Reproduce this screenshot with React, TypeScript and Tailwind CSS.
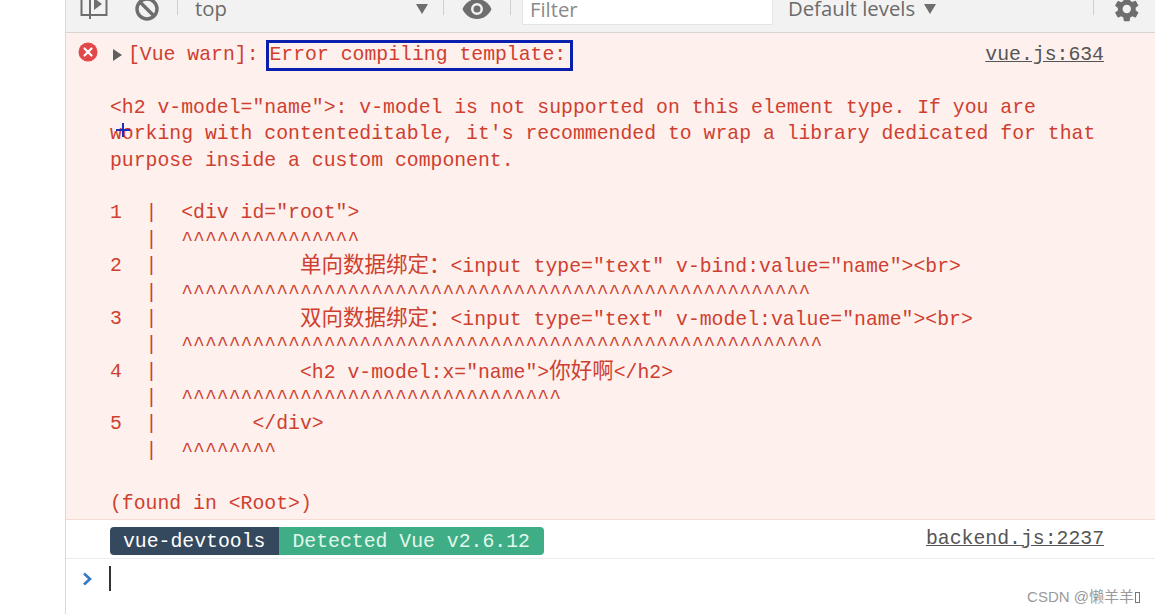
const codeLines: { num?: string; text: React.ReactNode }[] = [
  { num: '1', text: '<div id="root">' },
  { text: '^'.repeat(15) },
  { num: '2', text: <>{'          '}<Cjk>单向数据绑定：</Cjk>{'<input type="text" v-bind:value="name"><br>'}</> },
  { text: '^'.repeat(53) },
  { num: '3', text: <>{'          '}<Cjk>双向数据绑定：</Cjk>{'<input type="text" v-model:value="name"><br>'}</> },
  { text: '^'.repeat(54) },
  { num: '4', text: <>{'          <h2 v-model:x="name">'}<Cjk>你好啊</Cjk>{'</h2>'}</> },
  { text: '^'.repeat(32) },
  { num: '5', text: '      </div>' },
  { text: '^'.repeat(8) },
];

function Cjk({ children }: { children: React.ReactNode }) {
  return <span className="text-[21.5px]">{children}</span>;
}

function Line({ children }: { children?: React.ReactNode }) {
  return <div className="h-[26.4px] leading-[26.4px] whitespace-pre">{children}</div>;
}

function Separator() {
  return <div className="w-px h-[22px] -mt-[10px] bg-[#cfcfcf] shrink-0" />;
}

function Triangle() {
  return (
    <svg width="14" height="12" viewBox="0 0 14 12" className="shrink-0">
      <path d="M1 1h12l-6 10z" fill="#6e6e6e" />
    </svg>
  );
}

export default function App() {
  return (
    <div className="h-[614px] w-[1155px] overflow-hidden bg-white pl-[65px] font-['Liberation_Mono','Noto_Sans_CJK_SC',monospace] text-[19.8px]">
      <div className="h-full border-l border-[#d9d9d9]">
        {/* toolbar, cut off at the top of the shot */}
        <div className="h-[33px] pb-[14px] bg-[#f2f2f2] border-b border-[#d8d4d2] flex items-center font-['Open_Sans',sans-serif] text-[20.3px] text-[#6a6a6a]">
          <svg width="28" height="24" viewBox="0 0 28 24" className="ml-[14px] shrink-0 -mt-[4px]">
            <path d="M1.5 0v20h25V0M10 0v24" fill="none" stroke="#6e6e6e" strokeWidth="2" />
            <path d="M14 3l8 6-8 6z" fill="#6e6e6e" />
          </svg>
          <svg width="24" height="24" viewBox="0 0 24 24" className="ml-[27px] shrink-0">
            <circle cx="12" cy="12" r="10" fill="none" stroke="#6e6e6e" strokeWidth="3.4" />
            <path d="M5 5l14 14" stroke="#6e6e6e" strokeWidth="3.4" />
          </svg>
          <div className="ml-[18px]"><Separator /></div>
          <span className="ml-[17px] w-[220px] -mt-[2px]">top</span>
          <Triangle />
          <div className="ml-[14px]"><Separator /></div>
          <svg width="30" height="22" viewBox="0 0 30 22" className="ml-[18px] shrink-0">
            <path fillRule="evenodd" d="M15 1C8.5 1 3 5 .5 11 3 17 8.500 21 15 21s12-4 14.500-10C27 5 21.500 1 15 1zm0 16a6 6 0 1 1 0-12 6 6 0 0 1 0 12zm0-9.500a3.500 3.500 0 1 0 0 7 3.500 3.500 0 0 0 0-7z" fill="#6e6e6e" />
          </svg>
          <div className="ml-[18px]"><Separator /></div>
          <div className="ml-[11px] w-[251px] h-[25px] self-start bg-white border border-[#e4e4e4] border-t-0 pl-[7px] leading-[19px] text-[#8a8a8a]">Filter</div>
          <span className="ml-[15px] -mt-[2px] whitespace-nowrap">Default levels</span>
          <div className="ml-[8px]"><Triangle /></div>
          <div className="ml-[156px]"><Separator /></div>
          <svg width="28" height="28" viewBox="0 0 24 24" className="ml-[19px] shrink-0">
            <path d="M19.4 13c.04-.32.06-.66.06-1s-.02-.68-.07-1l2.160-1.680a.5.5 0 0 0 .12-.640l-2.050-3.540a.5.5 0 0 0-.62-.22l-2.550 1.020a7.500 7.500 0 0 0-1.730-1l-.39-2.710A.5.5 0 0 0 13.830 2H9.750a.5.5 0 0 0-.5.430l-.38 2.710a7.800 7.800 0 0 0-1.730 1L4.590 5.120a.5.5 0 0 0-.61.22L1.930 8.880a.5.5 0 0 0 .12.640L4.210 11.200c-.05.32-.08.66-.08 1s.02.68.07 1l-2.160 1.680a.5.5 0 0 0-.12.640l2.050 3.540c.13.220.39.300.62.220l2.550-1.020c.53.400 1.110.740 1.730 1l.38 2.710c.05.240.25.430.5.430h4.080c.25 0 .46-.19.500-.43l.38-2.710a7.800 7.800 0 0 0 1.730-1l2.550 1.020c.23.08.49 0 .62-.22l2.050-3.540a.5.5 0 0 0-.12-.640zM11.800 15.600a3.600 3.600 0 1 1 0-7.200 3.600 3.600 0 0 1 0 7.200z" fill="#6e6e6e" />
          </svg>
        </div>

        {/* error message */}
        <div className="h-[487px] bg-[#fdf0ed] border-b border-[#f8d9d4] pt-[9px] flex text-[#cf3f30]">
          <div className="w-[44px] shrink-0 flex justify-center">
            <svg width="20" height="20" viewBox="0 0 20 20">
              <circle cx="10" cy="10" r="9.500" fill="#e2474a" />
              <path d="M6.500 6.500l7 7M13.500 6.500l-7 7" stroke="#fff" strokeWidth="2.200" strokeLinecap="round" />
            </svg>
          </div>
          <div className="flex-1 pr-[51px] min-w-0">
            <div className="flex justify-between h-[26.4px] leading-[26.4px]">
              <div className="flex items-center whitespace-pre">
                <svg width="10" height="12" viewBox="0 0 10 12" className="ml-[3px] mr-[5px] shrink-0">
                  <path d="M0 0l9 6-9 6z" fill="#5f5f5f" />
                </svg>
                <span className="-mr-[1px]">[Vue warn]: </span>
                <span className="inline-block h-[25px] leading-[25px] pr-[4px] outline-[3px] outline-solid outline-[#0a1fae]">Error compiling template:</span>
              </div>
              <span className="underline text-[#555555]">vue.js:634</span>
            </div>
            <Line />
            <Line>{'<h2 v-model="name">: v-model is not supported on this element type. If you are'}</Line>
            <Line>{"working with contenteditable, it's recommended to wrap a library dedicated for that"}</Line>
            <Line>purpose inside a custom component.</Line>
            <Line />
            {codeLines.map((row, i) => (
              <div key={i} className="flex h-[26.4px] leading-[26.4px] whitespace-pre">
                <span>{(row.num ?? ' ') + '  |  '}</span>
                <span>{row.text}</span>
              </div>
            ))}
            <Line />
            <Line>{'(found in <Root>)'}</Line>
          </div>
        </div>

        {/* devtools badge */}
        <div className="h-[39px] border-b border-[#ececec] flex items-center justify-between pl-[44px] pr-[51px]">
          <div className="flex h-[28px] leading-[30px] mt-[3px] rounded-[4px] overflow-hidden">
            <span className="bg-[#35495e] pl-[13px] pr-[14px] text-white">vue-devtools</span>
            <span className="bg-[#3fae86] px-[13px] pr-[14px] text-[#e2f7ec]">Detected Vue v2.6.12</span>
          </div>
          <span className="underline text-[#555555] mt-[1px]">backend.js:2237</span>
        </div>

        {/* console prompt */}
        <div className="relative flex items-center h-[40px] pl-[16px] gap-[17px]">
          <svg width="11" height="14" viewBox="0 0 11 14" className="shrink-0 -mt-[1px]">
            <path d="M2 1.500L8 7l-6 5.500" fill="none" stroke="#3478c6" strokeWidth="2.600" />
          </svg>
          <div className="w-[2px] h-[25px] bg-[#333333] -mt-[2px] -ml-[1px]" />
          <div className="absolute right-[15px] top-[27px] flex items-center font-['Liberation_Sans','Noto_Sans_CJK_SC',sans-serif] text-[15px] text-[#9a9a9a] whitespace-nowrap">
            CSDN @懒羊羊
            <span className="ml-px w-[5px] h-[11px] border border-[#777777]" />
          </div>
        </div>
      </div>

      {/* mouse cursor captured in the recording */}
      <svg width="14" height="14" viewBox="0 0 14 14" className="absolute left-[116px] top-[123px]">
        <path d="M7 0v14M0 7h14" stroke="#1a2fc0" strokeWidth="2" />
      </svg>
    </div>
  );
}
